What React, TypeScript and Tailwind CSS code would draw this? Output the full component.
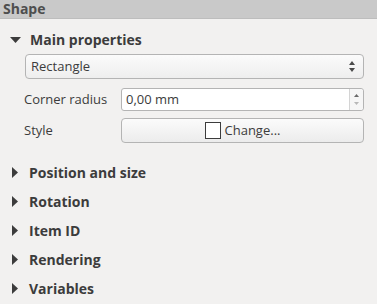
import { useState } from "react";

const sections = ["Position and size", "Rotation", "Item ID", "Rendering", "Variables"];

const DownArrow = () => (
  <svg width="11" height="6" viewBox="0 0 11 6" className="shrink-0">
    <path d="M0 0h11L5.5 6z" fill="#3c3c3c" />
  </svg>
);

const RightArrow = () => (
  <svg width="6" height="11" viewBox="0 0 6 11" className="shrink-0">
    <path d="M0 0l6 5.5L0 11z" fill="#3c3c3c" />
  </svg>
);

const App = () => {
  const [radius] = useState("0,00 mm");

  return (
    <div
      className="w-[377px] h-[304px] overflow-hidden bg-[#f2f1f0] text-[#3c3c3c] text-[13px]"
      style={{ fontFamily: '"Open Sans", "DejaVu Sans", sans-serif' }}
    >
      {/* Panel title */}
      <div className="h-[19px] bg-[#c9c9c9] border-b border-[#bdbdbd] pl-[3px] flex items-center font-bold text-[14px] text-[#4e4e4e] leading-none">
        Shape
      </div>

      {/* Main properties */}
      <div className="flex items-center gap-[9px] pl-[10px] h-[19px] mt-[11px] font-bold text-[14px]">
        <DownArrow />
        <span>Main properties</span>
      </div>

      <div className="pl-[25px] pr-[13px] pt-[5px] flex flex-col">
        {/* Shape type combo */}
        <div className="h-[25px] rounded-[4px] border border-[#b4b4b4] bg-gradient-to-b from-[#fbfbfb] to-[#eeeeee] flex items-center justify-between pl-[5px] pr-[8px]">
          <span>Rectangle</span>
          <svg width="6" height="11" viewBox="0 0 6 11">
            <path d="M0 4L3 0L6 4z" fill="#4a4a4a" />
            <path d="M0 7h6L3 11z" fill="#4a4a4a" />
          </svg>
        </div>

        {/* Corner radius */}
        <div className="flex items-center mt-[9px] -ml-[1px]">
          <span className="w-[97px] shrink-0">Corner radius</span>
          <div className="flex-1 h-[23px] rounded-[3px] border border-[#b4b4b4] bg-white flex">
            <span className="flex-1 pl-[4px] flex items-center">{radius}</span>
            <div className="w-[14px] border-l border-[#d4d4d4] bg-[#f6f6f6] flex flex-col items-center justify-center gap-[5px] rounded-r-[3px]">
              <svg width="5" height="3" viewBox="0 0 5 3">
                <path d="M0 3L2.5 0L5 3z" fill="#6a6a6a" />
              </svg>
              <svg width="5" height="3" viewBox="0 0 5 3">
                <path d="M0 0h5L2.5 3z" fill="#b8b8b8" />
              </svg>
            </div>
          </div>
        </div>

        {/* Style */}
        <div className="flex items-center mt-[7px] -ml-[1px]">
          <span className="w-[97px] shrink-0">Style</span>
          <div className="flex-1 h-[25px] rounded-[4px] border border-[#b4b4b4] bg-gradient-to-b from-[#fbfbfb] to-[#ececec] flex items-center justify-center gap-[4px]">
            <span className="w-[16px] h-[17px] border border-[#3c3c3c] bg-white" />
            <span>Change...</span>
          </div>
        </div>
      </div>

      {/* Collapsed groups */}
      <div className="flex flex-col mt-[15px]">
        {sections.map((s) => (
          <div key={s} className="flex items-center gap-[11px] pl-[12px] h-[29px] font-bold text-[14px]">
            <RightArrow />
            <span>{s}</span>
          </div>
        ))}
      </div>
    </div>
  );
};

export default App;
